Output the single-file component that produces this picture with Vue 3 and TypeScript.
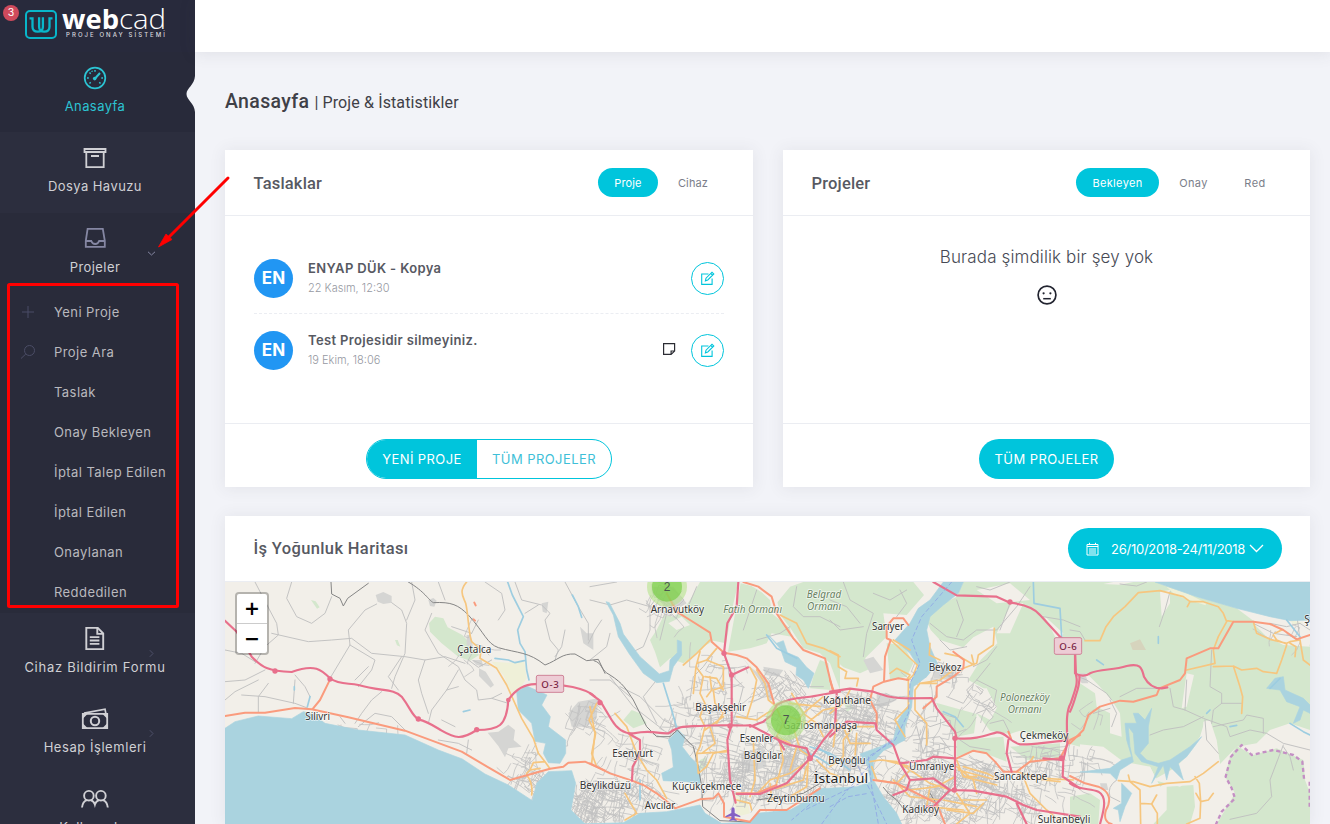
<script setup lang="ts">
interface MenuItem {
  label: string
  icon: string
  active?: boolean
  open?: boolean
  arrow?: boolean
  children?: { label: string; icon?: string }[]
}

const menu: MenuItem[] = [
  { label: 'Anasayfa', icon: 'gauge', active: true },
  { label: 'Dosya Havuzu', icon: 'archive' },
  {
    label: 'Projeler',
    icon: 'tray',
    open: true,
    arrow: true,
    children: [
      { label: 'Yeni Proje', icon: 'plus' },
      { label: 'Proje Ara', icon: 'search' },
      { label: 'Taslak' },
      { label: 'Onay Bekleyen' },
      { label: 'İptal Talep Edilen' },
      { label: 'İptal Edilen' },
      { label: 'Onaylanan' },
      { label: 'Reddedilen' },
    ],
  },
  { label: 'Cihaz Bildirim Formu', icon: 'file', arrow: true },
  { label: 'Hesap İşlemleri', icon: 'money', arrow: true },
  { label: 'Kullanıcılar', icon: 'users' },
]

const drafts = [
  { initials: 'EN', title: 'ENYAP DÜK - Kopya', date: '22 Kasım, 12:30', note: false },
  { initials: 'EN', title: 'Test Projesidir silmeyiniz.', date: '19 Ekim, 18:06', note: true },
]

// The map is drawn in four sheets, each with its own horizontal origin.
const A = 0
const B = 1095
const C = 1815
const D = 2535
type Shape = [number, string]

const woods: Shape[] = [
  [A, 'M612 130L630 110 655 115 668 142 712 165 735 190 762 225 735 242 700 230 650 190 615 155Z'],
  [A, 'M258 60l14 4 12 18-8 4zM510 180l8 0 8 20-10-4z'],
  [B, 'M300 60L330 6 445 6 428 80 408 190 370 182 340 200 300 235 280 250 240 235 210 262 195 215 180 180 200 150 222 105 250 110 280 90Z'],
  [B, 'M452 10L500 22 540 60 545 100 600 145 605 170 545 160 530 190 480 205 414 215Z'],
  [B, 'M560 60L600 20 640 6H750V330L720 250 690 220 640 205 605 150 575 110Z'],
  [B, 'M690 240L715 250 722 330 660 325 670 290Z'],
  [B, 'M100 420l25-30 25 10 20 30-40 15zM330 540l20-10 0 30-20 10z'],
  [C, 'M0 6H250L282 45 230 105 160 100 170 170 105 235 130 262 90 280 40 262 0 225Z'],
  [C, 'M170 190L220 195 250 250 230 290 180 300Z'],
  [C, 'M400 6H750V500L640 470 570 452 540 462 480 452 440 400 482 420 500 380 470 330 415 300 452 240 502 190 490 140 430 172 400 202 330 180 302 150 285 110 320 80 380 50Z'],
  [C, 'M318 368L440 402 432 460 380 470 340 410ZM380 480L520 470 530 545 440 510 380 530ZM540 500L690 490 690 530 590 540ZM40 360l20-5 10 30-20 10z'],
  [D, 'M0 6H255L380 50 500 85 560 130 640 160 720 195V450L660 430 600 450 560 490 500 500 450 552 440 500 405 420 390 470 350 520 330 580 270 620 240 560 160 545 100 500 0 490Z'],
  [D, 'M500 498L550 525 620 505 700 540 705 600 720 640V732H440L495 640 465 590 480 530Z'],
  [D, 'M290 620L370 615 375 680 360 732H250L290 690ZM0 650L60 640 90 660 85 732H0Z'],
]
const clearings: Shape[] = [
  [D, 'M15 285L55 285 85 315 125 360 150 400 155 470 120 460 120 400 80 380 75 340 30 310ZM350 280L372 285 350 380 335 385ZM400 425L420 420 440 480 450 550 390 580 330 620 250 600 320 560 400 470Z'],
  [D, 'M100 560L240 560 270 620 250 732H100ZM0 500L90 520 100 570 0 590ZM545 125L700 140 720 200 640 195 590 170ZM100 12L150 14 190 6H130ZM270 35L300 30 300 70 275 110Z'],
  [C, 'M440 30L540 10 600 60 500 70ZM640 105L700 160 690 200 655 130ZM410 330L470 325 500 385 480 420 420 380ZM545 70L580 70 540 160 500 160Z'],
  [B, 'M480 15L560 6 600 20 560 70 520 40ZM235 130L275 110 300 135 260 150Z'],
]
const built: Shape[] = [
  [A, 'M452 45L475 36 500 48 500 68 475 72 458 65ZM610 60L625 54 635 62 628 80 615 78ZM788 458L820 455 850 434 870 450 866 480 890 500 850 505 840 532 820 498ZM725 165l12 0 8 40-20-10zM740 240l30 0 5 20-20-5zM762 265l20 10 25 40-10 8-35-35zM1030 400l30-35 60-10-5 60-30 25-45 0zM1065 140l20 20 20 0 0 50-30-20zM950 70l20-5-5 35-12-5z'],
  [B, 'M190 20l60 0 40 50-50 30-50-60zM520 260l60 10-15 20-40-5zM440 210l40 50 50 40 20 60-12 0-30-60-60-80zM450 520l70-20 10 60-60 20zM570 530l50-10 0 60-40 10z'],
  [C, 'M100 240l30-10 30 40-40 10zM310 270l70-10-20 40-50-5zM440 590l80 50-10 8-70-45zM40 545l40 0 10 20-50 10zM140 340l30 0 30 20-60 30z'],
  [D, 'M20 280l25 0 10 30-20 0zM90 610l20 0 5 20-20 0z'],
]
const farmland: Shape[] = [
  [A, 'M800 245L850 248 898 245 905 295 890 318 860 340 835 285Z'],
  [D, 'M290 20l60 20 60 30-4 6-90-30zM660 120l40 8-30 6z'],
  [B, 'M430 640l40 10 10 50-40 10z'],
]
const waters: Shape[] = [
  [A, 'M0 445L30 425 100 408 200 416 235 395 262 402 300 430 400 450 540 465 640 510 712 537 780 582 850 615 922 662 935 610 970 575 1040 572 1052 610 1038 690 1080 732H0Z'],
  [A, 'M875 335L905 318 966 345 950 375 976 410 970 440 1022 480 1022 520 1005 550 970 548 955 520 962 490 930 484 920 430 880 390Z'],
  [B, 'M-20 732L100 728 150 700 230 695 330 675 345 700 395 730 480 726 500 700 600 690 640 668 690 625H760V732Z'],
  [B, 'M235 480L265 450 285 470 277 500 300 530 330 560 330 612 290 605 220 602 215 580 250 562 245 510Z'],
  [B, 'M48 65L58 68 90 130 100 162 150 230 208 282 238 272 240 240 262 218 262 180 274 185 275 225 250 260 238 304 200 308 160 280 118 222 85 170 70 105Z'],
  [B, 'M535 165L560 190 580 182 592 218 625 232 650 262 672 280 655 325 640 300 618 285 620 262 585 245 572 208Z'],
  [C, 'M340 6H400L385 40 340 75 300 110 290 150 300 200 322 250 290 290 250 320 245 380 225 440 225 480 160 512 130 545 130 600 160 650 200 700 215 732H0V625L80 620 122 606 115 560 90 522 150 500 190 480 205 420 240 370 240 310 265 260 240 220 195 180 240 130 265 85 300 60Z'],
  [D, 'M255 6L380 50 500 85 600 110 660 122 720 120V6Z'],
  [D, 'M190 400L205 400 225 420 245 385 235 440 235 490 210 520 230 540 265 550 300 540 360 500 395 470 350 530 325 550 340 600 300 560 290 600 280 555 245 610 265 560 215 545 195 520 190 460 175 440 180 500 190 545 150 570 140 600 120 580 30 576 120 565 155 540 185 530 170 480 165 430 200 430Z'],
  [D, 'M155 610L185 640 165 680 150 725 145 690 130 685 155 670ZM615 295L640 290 645 330 700 355 720 375 720 400 700 390 690 420 670 430 690 380 650 365 630 330 590 325Z'],
]
const moor = 'M180 190l30-12 18 32-40 0z'
const streams: Shape[] = [
  [A, 'M848 6L862 45 895 110 878 150 885 190 900 215 905 270 912 300M810 235l40 5 20 8 28-6M1042 45L1060 80 1070 112M255 350l-8 30M715 395l20-5M208 320l0 10'],
  [B, 'M220 310L245 390 262 450M150 600l0 60M530 165l30 40 60 30M680 500l60 40 40 30'],
  [C, 'M-60 500L0 520 40 545 90 550M610 6L612 70 690 85 695 170M340 395L375 410 400 440M-90 510L-40 530 0 555'],
  [D, 'M660 430L700 455 720 465M265 170l0 20M600 325l30-30M80 240l20 14M410 400l10-10M480 440l20-4M650 120l40 50'],
]
const motorways: Shape[] = [
  [A, 'M0 122L35 155 80 230C110 262 130 274 200 276 270 250 290 270 315 295 345 315 370 308 400 315 470 335 505 325 530 350 560 390 560 405 580 418 610 425 630 440 650 452 690 475 710 480 755 450 820 450 845 440 850 360 870 330 900 305 950 314 1010 310 1085 325 1110 350 1125 368L1180 430M0 408L70 340C100 295 120 285 150 276M580 418Q565 440 540 451M755 450L765 490'],
  [B, 'M0 340L30 362 65 420C80 445 100 462 130 460 190 448 200 462 235 460 270 435 290 440 330 438 400 432 470 440 480 435 530 460 570 485 600 495L650 505 662 535M660 535L590 610 510 642 440 642M445 6L440 80 412 130 402 220 425 285 425 430 412 480 420 600 437 668M425 285L475 262M480 440L520 425 545 405 560 375C600 350 650 355 690 345L750 335M662 535L700 480 735 440 740 340M115 460L150 480 150 520 128 560 126 602M560 470L582 508'],
  [C, 'M310 6L380 46 500 50 540 68C600 75 620 92 630 105L690 170 735 210 738 285C745 310 735 330 722 370 705 400 712 450 712 490L700 540 698 590M0 335L60 326 130 335C160 345 180 355 240 355L305 354 320 385 375 455 380 475C440 480 470 465 500 457 530 455 535 485 570 493 610 495 650 485 712 482M375 470L375 630M0 470L50 425 137 430 140 450 190 495 210 550 240 600M210 550L290 540 310 530 375 535M240 600L230 630 190 645M240 600L310 595 360 630 430 632 530 650 580 675 620 690 750 710M360 630L310 680 290 680M560 670L590 732M535 480L530 520 545 575M700 540L640 535M698 590L750 625'],
  [D, 'M15 220L15 280C30 290 50 288 60 280 90 265 130 272 170 258 210 250 215 260 222 290 235 315 255 325 275 325L292 322M28 285Q30 310 18 345 8 380 0 395M0 610C25 630 60 625 85 635 110 650 105 680 90 732'],
]
const primaries: Shape[] = [
  [A, 'M0 408L60 398 120 398 210 384 260 388 370 412 540 452 710 515 790 562 855 600 975 566 1015 560 1030 548 1080 545 1140 572M262 388L285 360 312 305M748 68l4 8M746 118l4 4'],
  [B, 'M230 40L260 95 300 120 360 158 365 185 402 218 440 225 470 235 500 262 535 310 552 370M460 6L505 20 545 50 560 100 590 145 610 175 640 210 705 235 728 330M0 550L60 580 126 602 160 615 200 640 240 672 255 685 330 658 370 655 385 640 402 670 402 710 480 725 510 690 590 690 690 625M440 640L500 640 560 615'],
  [C, 'M235 135L220 115 190 115 170 140 170 175 182 180 165 230 162 305 205 295 235 300M162 305L130 320 120 360 140 400 140 440M370 215L402 240 400 265 370 290 320 320 320 350 280 385M130 600L200 610 240 630 320 670 345 732M0 300L10 330M380 535L430 512 470 520 495 545 520 575 560 575 600 545 690 535 720 480 750 465M535 455l8 20'],
  [D, 'M0 490L40 450 55 405 90 380 150 362 190 365 260 345 268 325 330 300 345 280 350 235 420 205 445 205 490 125 550 125 600 132 640 150 680 178 720 165M0 588L45 610 85 620C120 635 125 660 108 690 100 715 110 730 125 732'],
]
const secondaries: Shape[] = [
  [A, 'M725 6C700 35 715 50 722 70 730 100 730 160 740 185L768 210 765 235 815 265 845 315 890 415 925 475 940 520 960 545 975 566M905 580L915 570 945 565M905 585Q925 610 920 645M925 548L960 545M1115 370L1092 420 1112 460 1100 520 1115 560M915 570L925 548'],
  [B, 'M0 380L15 460 5 550M75 400L110 440 140 520 170 570 200 600 230 655M105 640L140 700 105 720M360 180L320 220 280 255M330 215L318 260 340 290 330 340 345 370 330 410 345 440 330 500 320 520 325 580 350 560 370 520 415 510M380 205L350 240 322 250M350 240L400 260 400 320 370 330 375 370 400 400 380 430M345 290L380 295 400 330M360 440L375 490 335 520M400 410L345 450M480 262L500 300 490 350 470 415 440 410M500 270L525 310 535 360 560 380M440 410L500 420 530 400 560 385M560 385L580 430 560 470 600 490M605 340L640 400 610 440 630 510 660 530M700 350L640 400M690 380L600 370M660 540L600 580 540 600 500 642M490 480L495 600 480 650M570 490L580 540 560 610M620 500L600 570M570 105L620 130 650 190 700 205 750 230M655 540L650 620 600 650M440 660L480 670 485 690M680 540L720 580 750 590M600 410L650 430 700 390 750 380M318 260L310 340M360 290L365 330 350 350M325 520L415 515M540 610L545 660M640 400L680 430 700 470M650 560L640 600 560 625'],
  [C, 'M0 212L25 225 25 260 50 275 45 295 85 295 80 318M182 180L230 225 262 255 250 285 235 300 235 380 195 420 225 470M190 180L240 210M180 280L200 265 240 285 230 300M300 190L298 225 330 240M345 220L390 230 432 255 425 225M400 265L440 250 445 225 490 195 493 145M320 310L270 310 255 330 255 390 290 430 290 495M270 310L330 300 370 270M0 450L40 440 60 490 120 490M0 560L40 530 40 480 70 440 130 440M120 545L150 540 200 545 240 570 200 610 140 600 125 560M160 540L240 560M190 600L240 650 330 660M240 570L300 610 360 630M380 540L400 590 440 590M380 560L430 600 440 640M375 590L320 620 240 630M400 560L470 580 490 590M390 660L470 660M380 640L420 700 380 732M300 620L290 680 400 690M580 590L600 640 650 690 700 732M600 545L610 530M560 575L640 600 690 605M0 400L40 370 60 330M640 595L730 600M385 570L500 600M400 590L500 615M340 660L440 680M350 690L430 700 460 670M20 420L10 500M80 460L75 530'],
  [D, 'M45 182L90 182 108 140 130 110 165 80 205 38 270 32 340 50 360 65 400 65 445 80 460 100 470 125 445 170 430 210 435 250 350 270M352 80l8-15M470 122L490 125M550 125L560 160 600 178 650 190 660 185 690 180 700 240 720 255M430 260L490 258 515 270 560 265 580 275 620 280 635 240 650 195M490 258L510 320 518 350 515 400M660 190L678 200 675 230M615 160L635 150M610 165L620 180 650 192M145 602L190 605 240 620 290 610 360 605 400 580 445 545M175 585L180 605 210 630 212 732M212 670L245 672 262 700 262 732M260 645L245 672M430 640L415 660 392 665 388 610 375 590M378 640L392 665 390 715 350 732'],
]
const rails: Shape[] = [
  [A, 'M318 6L320 42 345 55 355 78 368 55 430 10M550 6C600 35 610 60 625 68 680 65 700 75 730 105 780 160 785 190 820 203 880 220 910 215 960 255 1000 240 1010 220 1050 222L1085 242 1120 238 1140 280'],
  [B, 'M12 242C40 250 30 270 60 285 100 310 110 330 130 360L170 440 200 470 240 470 262 450 280 470 310 500 325 560 335 620 338 680 390 722 480 726M500 660L640 640 690 610'],
  [C, 'M160 622L175 640 200 660 220 685M300 640L330 690'],
]
const paths: Shape[] = [
  [A, 'M90 6L118 60 155 130 160 165 120 200 90 250M140 160L250 185 320 180 380 175 440 220 540 230 600 240 660 230 720 250M320 50L300 100 260 130 215 110 185 55 200 6M455 72L420 90 370 150 375 195 330 270 315 295M375 195L450 240 440 270 400 320M500 68L530 90 545 130 540 220 510 290 500 325M530 230L490 290 520 330M600 240L580 300 590 340 610 400M470 335L440 360 410 400 390 430M120 270L60 300 0 305M0 210L50 220 90 245M130 310L100 350 100 395M50 345L120 350 210 370 250 385M620 100L600 150 640 220 700 260 720 300 755 330 760 360 800 355 830 340M800 355L850 370M700 270L665 330 620 390 610 430M665 330L700 320M730 240L760 262 800 240M780 6L830 40 840 90 820 120M870 6L890 60 950 75 975 100 960 120 975 180 1000 210 990 240M1020 150L1010 200 990 230M1130 120L1110 150 1090 190M1020 6L1060 80 1090 130 1090 180M940 75L900 100M560 6L570 60 545 120M640 6L660 60M210 300L205 370M210 285L240 320 255 350M0 360L30 335 100 300M430 260L390 300M690 440L650 420M730 480L725 520M360 430L345 410M400 440L450 400 500 410 540 450M640 480L700 490 740 510M680 140L740 160M760 120L740 160'],
  [B, 'M0 60L60 75 110 60 180 80 195 60M180 80L180 150 160 200 130 215M0 20L80 6M60 160L50 200 0 240M230 100L210 180M290 90L320 20M90 320L150 350 220 420 260 440M200 300L160 350 200 430M60 290L130 380 220 450M0 300L60 300 120 350M380 205L340 260 310 290 300 360M500 30L480 90 460 150M620 20L610 80 640 110 690 110 750 140M600 140L570 160 500 180M430 290L460 320 450 360 430 420M520 270L600 300 640 320 700 320'],
  [C, 'M40 6L60 60 130 100 110 160 100 230M0 60L50 80 90 130M210 30L230 70 200 110M130 40L180 60 230 30M300 130L350 170 400 180 440 150 500 150 560 80 600 20M330 180L360 210 410 200M380 60L400 120 380 170M540 70L510 150M480 250L440 300 410 330 430 360 480 380M440 300L500 330 490 380 440 400M420 340L400 370 350 350M500 200L470 240 430 260M640 110L700 120 750 140M540 6L480 30 440 20M270 420L300 440 360 420 370 480M250 480L330 470 360 510M260 440L280 520 360 500M390 480L420 500 480 510M480 430L520 420 540 460M0 120L30 150 100 140'],
  [D, 'M0 150L30 155 45 180M20 288L50 300 110 340 125 360M300 325L310 380 345 390 400 415 470 440 480 470 540 450 590 460 640 490 720 510M345 390L350 300M240 465L280 450 340 440 400 410M425 210L420 320 455 340 455 370 515 370M455 370L430 390 425 430M405 420L410 480 445 520M580 460L580 415 530 405 520 420 430 440M640 495L600 600 605 650 560 700 480 718M300 35L285 90 268 140M120 360L140 400 125 440M150 350L200 325 270 325M70 400L120 385M640 500l20 30 10 40M150 12L200 18 230 6M550 130L610 160 680 170M600 130L650 140 690 130 720 150M680 100L690 180M140 600Q110 620 120 650L150 665'],
]

function rng(seed: number) {
  let s = seed
  return () => {
    s = (s * 1664525 + 1013904223) % 4294967296
    return s / 4294967296
  }
}

// Street network of a built-up district: short bending lanes on a rotated grid.
function streets(cx: number, cy: number, rx: number, ry: number, n: number, tilt: number): string {
  const rand = rng(Math.round(cx * 31 + cy * 17 + n))
  let d = ''
  for (let i = 0; i < n * 0.55; i++) {
    const t = rand() * Math.PI * 2
    const r = Math.sqrt(rand())
    let x = cx + Math.cos(t) * rx * r
    let y = cy + Math.sin(t) * ry * r
    d += `M${x.toFixed(0)} ${y.toFixed(0)}`
    let dir = tilt + (rand() > 0.5 ? Math.PI / 2 : 0) + (rand() - 0.5) * 0.6
    const steps = 2 + Math.floor(rand() * 4)
    for (let k = 0; k < steps; k++) {
      const len = 10 + rand() * 22
      x += Math.cos(dir) * len
      y += Math.sin(dir) * len
      d += `L${x.toFixed(0)} ${y.toFixed(0)}`
      dir += rand() > 0.7 ? Math.PI / 2 : (rand() - 0.5) * 0.7
    }
  }
  return d
}

const districts: string[] = [
  streets(B + 30, 650, 85, 70, 120, 0.3),
  streets(B + 110, 530, 90, 80, 60, 0.4),
  streets(B + 170, 640, 60, 50, 40, 0.5),
  streets(B + 360, 360, 60, 150, 110, 0.1),
  streets(B + 370, 560, 60, 70, 60, 0.2),
  streets(B + 510, 560, 110, 90, 190, 0.1),
  streets(B + 640, 440, 110, 100, 180, 0.5),
  streets(B + 590, 310, 70, 45, 60, 0.8),
  streets(B + 660, 590, 60, 50, 60, 0.4),
  streets(B + 270, 400, 30, 90, 25, 0.2),
  streets(B + 230, 50, 50, 45, 35, 0.6),
  streets(C + 60, 390, 90, 70, 110, 0.4),
  streets(C + 70, 510, 80, 60, 70, 0.2),
  streets(C + 150, 400, 55, 80, 60, 0.3),
  streets(C + 300, 440, 45, 100, 55, 0.2),
  streets(C + 270, 600, 110, 80, 150, 0.4),
  streets(C + 420, 640, 130, 80, 160, 0.5),
  streets(C + 600, 620, 110, 90, 90, 0.2),
  streets(C + 440, 550, 80, 35, 50, 0.4),
  streets(C + 330, 275, 50, 30, 30, 0.2),
  streets(C + 610, 520, 90, 25, 35, 0.1),
  streets(C + 440, 365, 50, 50, 24, 0.6),
  streets(A + 915, 595, 38, 40, 60, 0.5),
  streets(A + 1095, 650, 45, 60, 70, 0.5),
  streets(A + 1085, 400, 45, 45, 40, 0.3),
  streets(A + 900, 530, 60, 30, 20, 0.3),
  streets(A + 735, 210, 35, 50, 12, 0.5),
  streets(D + 40, 535, 50, 30, 26, 0.1),
  streets(D + 650, 150, 55, 18, 6, 0.3),
  streets(D + 60, 400, 50, 20, 6, 0.3),
  streets(A + 400, 440, 130, 10, 16, 0.2),
]

interface Label {
  x: number
  y: number
  w: number
  t: string
  kind?: string
}
const labels: Label[] = [
  { x: 748, y: 219, w: 102, t: 'Çatalca' },
  { x: 278, y: 419, w: 74, t: 'Silivri' },
  { x: B + 262, y: 98, w: 160, t: 'Arnavutköy' },
  { x: B + 488, y: 98, w: 176, t: 'Fatih Ormanı', kind: 'forest' },
  { x: 1797, y: 54, w: 103, t: 'Belgrad', kind: 'forest' },
  { x: 1797, y: 90, w: 102, t: 'Ormanı', kind: 'forest' },
  { x: B + 392, y: 392, w: 152, t: 'Başakşehir' },
  { x: B + 500, y: 486, w: 101, t: 'Esenler' },
  { x: 1785, y: 448, w: 222, t: 'Gaziosmanpaşa' },
  { x: B + 518, y: 536, w: 113, t: 'Bağcılar' },
  { x: B + 128, y: 531, w: 122, t: 'Esenyurt' },
  { x: B + 350, y: 630, w: 208, t: 'Küçükçekmece' },
  { x: 1141, y: 628, w: 154, t: 'Beylikdüzü' },
  { x: B + 210, y: 688, w: 92, t: 'Avcılar' },
  { x: B + 618, y: 667, w: 172, t: 'Zeytinburnu' },
  { x: 1848, y: 609, w: 163, t: 'İstanbul', kind: 'city' },
  { x: C + 174, y: 150, w: 96, t: 'Sarıyer' },
  { x: C + 345, y: 272, w: 98, t: 'Beykoz' },
  { x: 1866, y: 373, w: 144, t: 'Kağıthane' },
  { x: C + 584, y: 363, w: 148, t: 'Polonezköy', kind: 'forest' },
  { x: C + 584, y: 398, w: 102, t: 'Ormanı', kind: 'forest' },
  { x: C + 642, y: 477, w: 146, t: 'Çekmeköy' },
  { x: 1866, y: 553, w: 112, t: 'Beyoğlu' },
  { x: C + 305, y: 570, w: 136, t: 'Ümraniye' },
  { x: C + 572, y: 601, w: 160, t: 'Sancaktepe' },
  { x: C + 272, y: 699, w: 110, t: 'Kadıköy' },
  { x: 2517, y: 730, w: 158, t: 'Sultanbeyli' },
  { x: D + 711, y: 129, w: 17, t: 'Ş' },
]

const layers: { cls: string; shapes: Shape[] }[] = [
  { cls: 'wood', shapes: woods },
  { cls: 'land', shapes: clearings },
  { cls: 'farm', shapes: farmland },
  { cls: 'built', shapes: built },
]
const roadLayers: { cls: string; shapes: Shape[] }[] = [
  { cls: 'water', shapes: waters },
  { cls: 'stream', shapes: streams },
  { cls: 'rail', shapes: rails },
  { cls: 'secondary', shapes: secondaries },
  { cls: 'primary', shapes: primaries },
  { cls: 'motorway', shapes: motorways },
]
</script>

<template>
  <div class="app">
    <aside class="sidebar">
      <div class="brand">
        <span class="badge">3</span>
        <svg class="logo" width="195" height="52" viewBox="0 0 195 52">
          <rect x="26" y="11" width="30" height="27" rx="4" fill="none" stroke="#08b6ca" stroke-width="2" />
          <g fill="none" stroke="#08b6ca" stroke-width="2.300">
            <path d="M29.500 18.300h3v8.500q0 4.900 5.200 4.900t5.200-4.900V17.200" />
            <path d="M52.500 18.300h-3v8.500q0 4.900-5.200 4.900t-5.200-4.900V17.200" />
          </g>
          <text x="62" y="29" class="web" textLength="57" lengthAdjust="spacingAndGlyphs">web</text>
          <text x="119" y="29" class="cad" textLength="47" lengthAdjust="spacingAndGlyphs">cad</text>
          <text x="66" y="37" class="slogan" textLength="99">PROJE ONAY SİSTEMİ</text>
        </svg>
      </div>
      <nav class="menu">
        <div v-for="m in menu" :key="m.label" class="group" :class="{ active: m.active, open: m.open }">
          <div class="item">
            <svg v-if="m.icon === 'gauge'" class="ico" width="26" height="26" viewBox="0 0 26 26" fill="none" stroke="currentColor">
              <circle cx="13" cy="13" r="10.300" stroke-width="1.700" />
              <path d="M13 13.500L18 8" stroke-width="2" />
              <circle cx="12.700" cy="13.600" r="1.800" fill="currentColor" stroke="none" />
              <path d="M13 5v1.800M7.500 7.500l1.200 1.200M5 13h1.800M7.500 18.500l1.200-1.200M18.500 18.500l-1.200-1.200M19.300 13H21M9.900 5.800l.4 1" stroke-width="1.500" />
            </svg>
            <svg v-else-if="m.icon === 'archive'" class="ico" width="26" height="26" viewBox="0 0 26 26" fill="none" stroke="currentColor">
              <path d="M2.500 4h21v3h-21zM4.300 7v15.200h17.400V7" stroke-width="1.800" />
              <path d="M9 11h8" stroke-width="2" />
            </svg>
            <svg v-else-if="m.icon === 'tray'" class="ico" width="26" height="26" viewBox="0 0 26 26" fill="none" stroke="currentColor" stroke-width="1.800">
              <path d="M5.600 2.800h15.200l2 12v6H3.800v-6z" />
              <path d="M4 15h5.300q1 3 3.900 3t3.900-3H23" />
            </svg>
            <svg v-else-if="m.icon === 'file'" class="ico" width="26" height="26" viewBox="0 0 26 26" fill="none" stroke="currentColor">
              <path d="M4.300 1.900h11.500l5.400 5.600v15.600H4.300z" stroke-width="1.900" />
              <path d="M15.300 1.900v6h5.900" stroke-width="1.900" />
              <path d="M7.800 11.200h9.600M7.800 14.500h9.600M7.800 17.800h9.600" stroke-width="1.800" />
            </svg>
            <svg v-else-if="m.icon === 'money'" class="ico" width="28" height="26" viewBox="0 0 28 26" fill="none" stroke="currentColor">
              <path d="M1.800 7.800h24.400v14.400H1.800z" stroke-width="1.800" />
              <path d="M3 7.200L24 3.200l.8 4" stroke-width="1.700" />
              <path d="M2 8h4.500L2 12.500zM26 8h-4.500L26 12.500zM2 22h4.500L2 17.500zM26 22h-4.500L26 17.500z" fill="currentColor" stroke="none" />
              <circle cx="14" cy="15" r="4.200" stroke-width="2" />
            </svg>
            <svg v-else class="ico" width="28" height="26" viewBox="0 0 28 26" fill="none" stroke="currentColor" stroke-width="1.900">
              <circle cx="7.900" cy="9.700" r="4.800" />
              <circle cx="19.900" cy="9.700" r="4.800" />
              <path d="M1 21.500q.6-6 5-7.400M9.800 14.100q3.200 1.200 4.100 4.400.9-3.200 4.100-4.400M21.800 14.100q4.400 1.400 5 7.400" />
            </svg>
            <span class="item-label">{{ m.label }}</span>
            <svg v-if="m.arrow" class="caret" width="9" height="9" viewBox="0 0 9 9" fill="none" stroke="currentColor">
              <path :d="m.open ? 'M1 2.800L4.500 6 8 2.800' : 'M2.800 1.200L6 4.500 2.800 7.800'" />
            </svg>
          </div>
          <ul v-if="m.children" class="sub">
            <li v-for="c in m.children" :key="c.label">
              <span class="sub-ico">
                <svg v-if="c.icon === 'plus'" width="16" height="16" viewBox="0 0 16 16" fill="none" stroke="currentColor"><path d="M8 2v12M2 8h12" /></svg>
                <svg v-if="c.icon === 'search'" width="16" height="16" viewBox="0 0 16 16" fill="none" stroke="currentColor"><circle cx="9.500" cy="6.500" r="5" /><path d="M5.800 10L1 14.500" /></svg>
              </span>
              <span>{{ c.label }}</span>
            </li>
          </ul>
        </div>
      </nav>
      <svg class="notch" width="9" height="36" viewBox="0 0 9 36"><path d="M9 0C8.500 9 .5 12 .5 18S8.500 27 9 36z" fill="#f2f3f8" /></svg>
    </aside>

    <div class="page">
      <header class="topbar"></header>
      <main class="content">
        <h1><b>Anasayfa</b> <span>| Proje &amp; İstatistikler</span></h1>

        <div class="cards">
          <section class="card">
            <div class="card-head">
              <h2>Taslaklar</h2>
              <div class="tabs"><span class="tab on proje">Proje</span><span class="tab cihaz">Cihaz</span></div>
            </div>
            <div class="card-body list">
              <div v-for="d in drafts" :key="d.title" class="draft">
                <span class="avatar">{{ d.initials }}</span>
                <div class="draft-text">
                  <div class="draft-title">{{ d.title }}</div>
                  <div class="draft-date">{{ d.date }}</div>
                </div>
                <svg v-if="d.note" class="note" width="14" height="14" viewBox="0 0 14 14" fill="none" stroke="#2b2c33" stroke-width="1.200">
                  <path d="M1.600 1.600h11v7.500l-3.500 3.300H1.600zM12.600 9H9.100v3.400" />
                </svg>
                <span class="round">
                  <svg width="15" height="15" viewBox="0 0 15 15" fill="none" stroke="currentColor" stroke-width="1.100">
                    <path d="M8.500 3H1.700v10.400h10.400V7.500" />
                    <path d="M5.400 9.800l.6-2.600 6-6 1.800 1.800-6 6zM10.800 2.500l1.700 1.700" />
                  </svg>
                </span>
              </div>
            </div>
            <div class="card-foot">
              <div class="pair"><span class="fill">YENİ PROJE</span><span class="line">TÜM PROJELER</span></div>
            </div>
          </section>

          <section class="card">
            <div class="card-head right-head">
              <h2>Projeler</h2>
              <div class="tabs"><span class="tab on bekleyen">Bekleyen</span><span class="tab onay">Onay</span><span class="tab red">Red</span></div>
            </div>
            <div class="card-body empty">
              <div class="empty-text">Burada şimdilik bir şey yok</div>
              <svg width="22" height="22" viewBox="0 0 22 22" fill="none" stroke="#222430">
                <circle cx="11" cy="11" r="8.900" stroke-width="1.700" />
                <path d="M7.200 14.700h7.600" stroke-width="1.500" />
                <circle cx="7.600" cy="9.300" r="1.100" fill="#222430" stroke="none" />
                <circle cx="14.400" cy="9.300" r="1.100" fill="#222430" stroke="none" />
              </svg>
            </div>
            <div class="card-foot"><span class="pill">TÜM PROJELER</span></div>
          </section>
        </div>

        <section class="card map-card">
          <div class="card-head map-head">
            <h2>İş Yoğunluk Haritası</h2>
            <span class="range">
              <svg width="13" height="14" viewBox="0 0 13 14" fill="none" stroke="currentColor">
                <path d="M1 2.500h11v10.500H1zM1 4.500h11M3.500 .8v2M9.500 .8v2M3 7h7M3 9h7M3 11h7" />
              </svg>
              <span class="range-text">26/10/2018-24/11/2018</span>
              <svg width="15" height="9" viewBox="0 0 15 9" fill="none" stroke="currentColor" stroke-width="1.300"><path d="M1 1l6.500 6.500L14 1" /></svg>
            </span>
          </div>
          <div class="map">
            <svg class="map-svg" viewBox="0 6 3255 726" preserveAspectRatio="none">
              <rect class="land" x="0" y="0" width="3255" height="740" />
              <g v-for="l in layers" :key="l.cls" :class="l.cls">
                <path v-for="(s, i) in l.shapes" :key="i" :d="s[1]" :transform="`translate(${s[0]} 0)`" />
              </g>
              <path class="moor" :d="moor" :transform="`translate(${D} 0)`" />
              <g class="minor">
                <path v-for="(s, i) in paths" :key="i" :d="s[1]" :transform="`translate(${s[0]} 0)`" />
              </g>
              <g class="streets"><path v-for="(d, i) in districts" :key="i" :d="d" /></g>
              <g v-for="l in roadLayers" :key="l.cls" :class="l.cls">
                <path v-for="(s, i) in l.shapes" :key="i" :d="s[1]" :transform="`translate(${s[0]} 0)`" />
              </g>
              <g class="ferry">
                <path d="M2180 6L2090 110 2060 180 2085 250 2055 310 2050 400 2010 480 1930 530 1940 620 1960 732M1815 680L1870 650 1930 640M1930 560L1850 650 1790 732M1925 600L1740 690M1900 560L1950 660 1985 732M2000 480L1920 545M1770 660L1700 720" />
              </g>
              <path class="border" d="M2972 735L2990 695 3030 655 3020 625 3002 590 3018 530 3050 495 3080 525 3145 510 3205 525 3232 545 3238 605M3254 605V680" />
              <g class="knots">
                <circle cx="150" cy="273" r="8" /><circle cx="315" cy="297" r="8" /><circle cx="580" cy="417" r="8" />
                <circle cx="755" cy="449" r="8" /><circle cx="850" cy="360" r="7" /><circle cx="1125" cy="368" r="8" />
                <circle cx="1520" cy="285" r="8" /><circle cx="1497" cy="220" r="8" /><circle cx="1515" cy="438" r="8" />
                <circle cx="1755" cy="535" r="9" /><circle cx="2190" cy="475" r="8" /><circle cx="2188" cy="630" r="8" />
                <circle cx="2355" cy="66" r="8" /><circle cx="2510" cy="535" r="9" />
              </g>
              <path class="plane" d="M1524 682q5 0 5 9v8l17 9v4l-17-4v8l6 4v3l-11-2-11 2v-3l6-4v-8l-17 4v-4l17-9v-8q0-9 5-9z" />
              <text v-for="(l, i) in labels" :key="i" :x="l.x" :y="l.y" :textLength="l.w" lengthAdjust="spacingAndGlyphs" class="place" :class="l.kind">{{ l.t }}</text>
              <g class="shield">
                <rect x="934" y="286" width="82" height="51" rx="5" /><text x="975" y="324" textLength="52">O-3</text>
                <rect x="2488" y="173" width="82" height="50" rx="5" /><text x="2529" y="210" textLength="52">O-6</text>
              </g>
              <g class="cluster">
                <circle class="halo" cx="1326" cy="20" r="60" /><circle class="core" cx="1326" cy="20" r="45" /><text x="1326" y="32">2</text>
                <circle class="halo" cx="1683" cy="421" r="60" /><circle class="core" cx="1683" cy="421" r="45" /><text x="1683" y="433">7</text>
              </g>
            </svg>
            <div class="zoom"><span>+</span><span>−</span></div>
          </div>
        </section>
      </main>
    </div>

    <svg class="marks" width="1330" height="824" viewBox="0 0 1330 824">
      <rect x="8.500" y="284.500" width="169" height="322" rx="1" fill="none" stroke="#f00" stroke-width="3" />
      <path d="M228 178L169 237" stroke="#f00" stroke-width="3" stroke-linecap="round" />
      <path d="M158.500 247L166 234 172 239.500z" fill="#f00" stroke="#f00" stroke-width=".8" />
    </svg>
  </div>
</template>

<style>
body {
  margin: 0;
  overflow: hidden;
  background: #f2f3f8;
}
</style>

<style scoped>
.app {
  position: relative;
  display: flex;
  width: 1330px;
  height: 824px;
  overflow: hidden;
  font-family: Inter, "Open Sans", sans-serif;
  color: #575962;
  background: #f2f3f8;
}
.sidebar {
  position: relative;
  width: 195px;
  flex: none;
  height: 824px;
  overflow: hidden;
  background: #2c2e3e;
}
.brand {
  position: relative;
  height: 52px;
  background: #282a3c;
}
.logo { display: block; }
.web, .cad { font-family: "Open Sans", sans-serif; font-size: 27px; fill: #fff; }
.web { font-weight: 700; }
.cad { font-weight: 300; }
.slogan { font-size: 6px; font-weight: 500; fill: #d8d8df; }
.badge {
  position: absolute;
  left: 3px;
  top: 5px;
  width: 16px;
  height: 16px;
  border-radius: 50%;
  background: #cf4a5c;
  color: #fff;
  font-size: 10.500px;
  line-height: 16px;
  text-align: center;
}
.item {
  position: relative;
  display: flex;
  flex-direction: column;
  align-items: center;
  box-sizing: border-box;
  height: 80px;
  padding: 13px 5px 0 0;
  color: #d0d0d4;
}
.item-label {
  margin-top: 6px;
  font-size: 13px;
  line-height: 18px;
  letter-spacing: .42px;
  white-space: nowrap;
}
.group:nth-child(4) .item-label { letter-spacing: .72px; }
.group:nth-child(5) .item-label { letter-spacing: .55px; }
.ico { display: block; }
.group.active { background: #282a3a; }
.group.active .item { color: #2cc4d3; }
.group:nth-child(2) .item { height: 81px; }
.group.open { background: #292b3a; padding-bottom: 1px; }
.group.open .item { height: 79px; }
.group.open .ico, .group.open .caret { color: #8587a3; }
.caret {
  position: absolute;
  left: 147px;
  top: 36px;
  color: #4e5069;
}
.sub {
  list-style: none;
  margin: 0;
  padding: 0;
}
.sub li {
  display: flex;
  align-items: center;
  height: 40px;
  padding-left: 20px;
  font-size: 13px;
  letter-spacing: .43px;
  color: #b9b9be;
}
.sub-ico {
  width: 34px;
  height: 16px;
  color: #4b4d66;
}
.sub-ico svg { display: block; }
.notch {
  position: absolute;
  right: 0;
  top: 76px;
}
.page { flex: 1; min-width: 0; }
.topbar {
  position: relative;
  height: 52px;
  background: #fff;
  box-shadow: 0 1px 15px 1px rgba(69, 65, 78, .1);
}
.content { padding: 0 20px 0 30px; }
h1 {
  display: flex;
  align-items: baseline;
  gap: 5px;
  margin: 0;
  height: 98px;
  box-sizing: border-box;
  padding-top: 37px;
  font-family: Roboto, sans-serif;
  font-weight: 400;
  color: #3f4047;
}
h1 b { font-size: 19.500px; font-weight: 500; line-height: 26px; letter-spacing: .35px; }
h1 span { font-size: 16px; letter-spacing: .12px; }
.cards { display: flex; gap: 30px; }
.card {
  flex: 1;
  min-width: 0;
  background: #fff;
  box-shadow: 0 1px 15px 1px rgba(69, 65, 78, .08);
}
.cards .card:first-child { flex: 0 0 528px; }
.card-head {
  display: flex;
  align-items: center;
  justify-content: space-between;
  box-sizing: border-box;
  height: 66px;
  padding: 0 29px 0 28.500px;
  border-bottom: 1px solid #ebedf2;
}
.right-head { padding-right: 28px; }
h2 {
  margin: 0;
  padding-top: 1px;
  font-family: Roboto, sans-serif;
  font-size: 16.500px;
  font-weight: 500;
  letter-spacing: .18px;
  color: #575962;
}
.tabs { display: flex; gap: 4px; }
.tab {
  box-sizing: border-box;
  height: 29px;
  padding-top: 1px;
  border-radius: 15px;
  font-size: 11px;
  line-height: 28px;
  letter-spacing: .12px;
  text-align: center;
  color: #7b7e8a;
}
.tab.on { background: #00c5dc; color: #fff; }
.proje { width: 60px; }
.cihaz { width: 62px; }
.bekleyen { width: 83px; letter-spacing: .35px; }
.onay { width: 61px; letter-spacing: .4px; }
.red { width: 54px; letter-spacing: .4px; }
.card-body { height: 207px; box-sizing: border-box; }
.list { padding: 27px 29px 0; }
.draft {
  display: flex;
  align-items: center;
  box-sizing: border-box;
  height: 71px;
}
.draft:first-child { border-bottom: 1px dashed #ebedf2; }
.draft + .draft { height: 73px; }
.avatar {
  width: 39px;
  height: 39px;
  border-radius: 50%;
  background: #2196f3;
  color: #fff;
  font-size: 17px;
  font-weight: 700;
  line-height: 39px;
  text-align: center;
}
.draft-text { flex: 1; margin: -1px 0 0 15px; }
.draft + .draft .draft-text { margin-top: -3px; }
.draft-title {
  font-size: 13px;
  font-weight: 600;
  line-height: 18px;
  letter-spacing: .36px;
}
.draft-date {
  margin-top: 4px;
  font-size: 11px;
  line-height: 15px;
  font-weight: 300;
  color: #9699a2;
}
.note { margin: -3px 15px 0 0; }
.round {
  box-sizing: border-box;
  width: 33px;
  height: 33px;
  border: 1px solid #00c5dc;
  border-radius: 50%;
  color: #00c5dc;
  display: flex;
  align-items: center;
  justify-content: center;
}
.card-foot {
  display: flex;
  justify-content: center;
  box-sizing: border-box;
  height: 64px;
  padding-top: 15px;
  border-top: 1px solid #ebedf2;
  font-size: 13px;
}
.pair, .pill {
  box-sizing: border-box;
  height: 40px;
  line-height: 40px;
  border-radius: 20px;
  text-align: center;
}
.pair {
  display: flex;
  width: 246px;
  border: 1px solid #00c5dc;
  overflow: hidden;
  line-height: 38px;
}
.fill { width: 110px; background: #00c5dc; color: #fff; letter-spacing: .4px; }
.line { flex: 1; color: #3fbfd8; letter-spacing: .42px; }
.pill { width: 135px; background: #00c5dc; color: #fff; letter-spacing: .42px; }
.empty {
  display: flex;
  flex-direction: column;
  align-items: center;
  padding-top: 29px;
}
.empty-text {
  margin-bottom: 15px;
  font-size: 17px;
  line-height: 24px;
  font-weight: 300;
  letter-spacing: .12px;
  color: #474a55;
}
.map-card { margin-top: 29px; }
.range {
  display: flex;
  align-items: center;
  box-sizing: border-box;
  width: 214px;
  height: 41px;
  padding-left: 18px;
  border-radius: 21px;
  background: #00c5dc;
  color: #fff;
  font-size: 13px;
}
.map-head { padding-right: 28px; }
.map-head h2 { padding-top: 0; letter-spacing: .36px; }
.range-text { margin: 0 4px 0 12px; white-space: nowrap; letter-spacing: -.25px; }
.map { position: relative; height: 242px; overflow: hidden; }
.map-svg { display: block; width: 1085px; height: 242px; }
.land { fill: #f2efe9; }
.wood { fill: #d4e7cd; }
.farm { fill: #eff0d8; }
.built { fill: #d5d5d3; }
.moor { fill: #d6d4bd; }
.water { fill: #aad3df; stroke: #aad3df; stroke-width: 2; stroke-linejoin: round; }
.minor, .streets, .stream, .rail, .secondary, .primary, .motorway, .ferry, .border {
  fill: none;
  stroke-linejoin: round;
  stroke-linecap: round;
}
.minor { stroke: #bfbfbf; stroke-width: 2.800; }
.streets { stroke: #c2c2c2; stroke-width: 2.400; }
.stream { stroke: #9dcde0; stroke-width: 5; }
.rail { stroke: #858585; stroke-width: 3; }
.secondary { stroke: #f6c67f; stroke-width: 5; }
.primary { stroke: #fa9b7d; stroke-width: 6; }
.motorway { stroke: #e8708c; stroke-width: 6.500; }
.ferry { stroke: #8a9fe6; stroke-width: 2.200; stroke-dasharray: 12 9; }
.border { stroke: #c48fc4; stroke-width: 7; stroke-dasharray: 12 9; stroke-linecap: butt; }
.knots { fill: #e8708c; }
.plane { fill: #8461c4; }
.place {
  font-family: "Noto Sans", sans-serif;
  font-size: 32px;
  text-anchor: middle;
  fill: #333;
  stroke: rgba(255, 255, 255, .7);
  stroke-width: 5px;
  stroke-linejoin: round;
  paint-order: stroke;
}
.place.forest { font-style: italic; fill: #667f60; font-size: 31px; }
.place.city { font-size: 40px; fill: #222; }
.shield rect { fill: #edccd5; stroke: #cf8498; stroke-width: 3; }
.shield text {
  font-family: "Noto Sans", sans-serif;
  font-size: 29px;
  font-weight: 500;
  text-anchor: middle;
  fill: #7a2443;
}
.halo { fill: rgba(181, 226, 140, .6); }
.core { fill: rgba(110, 204, 57, .6); }
.cluster text {
  font-family: "Liberation Sans", Arial, sans-serif;
  font-size: 36px;
  text-anchor: middle;
  fill: #4c5550;
}
.zoom {
  position: absolute;
  left: 10px;
  top: 10px;
  width: 30px;
  border: 2px solid rgba(0, 0, 0, .25);
  border-radius: 4px;
  background: #fff;
  background-clip: padding-box;
}
.zoom span {
  display: block;
  height: 29px;
  font-family: "DejaVu Sans", sans-serif;
  font-size: 19px;
  font-weight: 700;
  line-height: 28px;
  text-align: center;
  color: #000;
}
.zoom span:first-child { border-bottom: 1px solid #ccc; }
.marks {
  position: absolute;
  left: 0;
  top: 0;
  pointer-events: none;
}
</style>
